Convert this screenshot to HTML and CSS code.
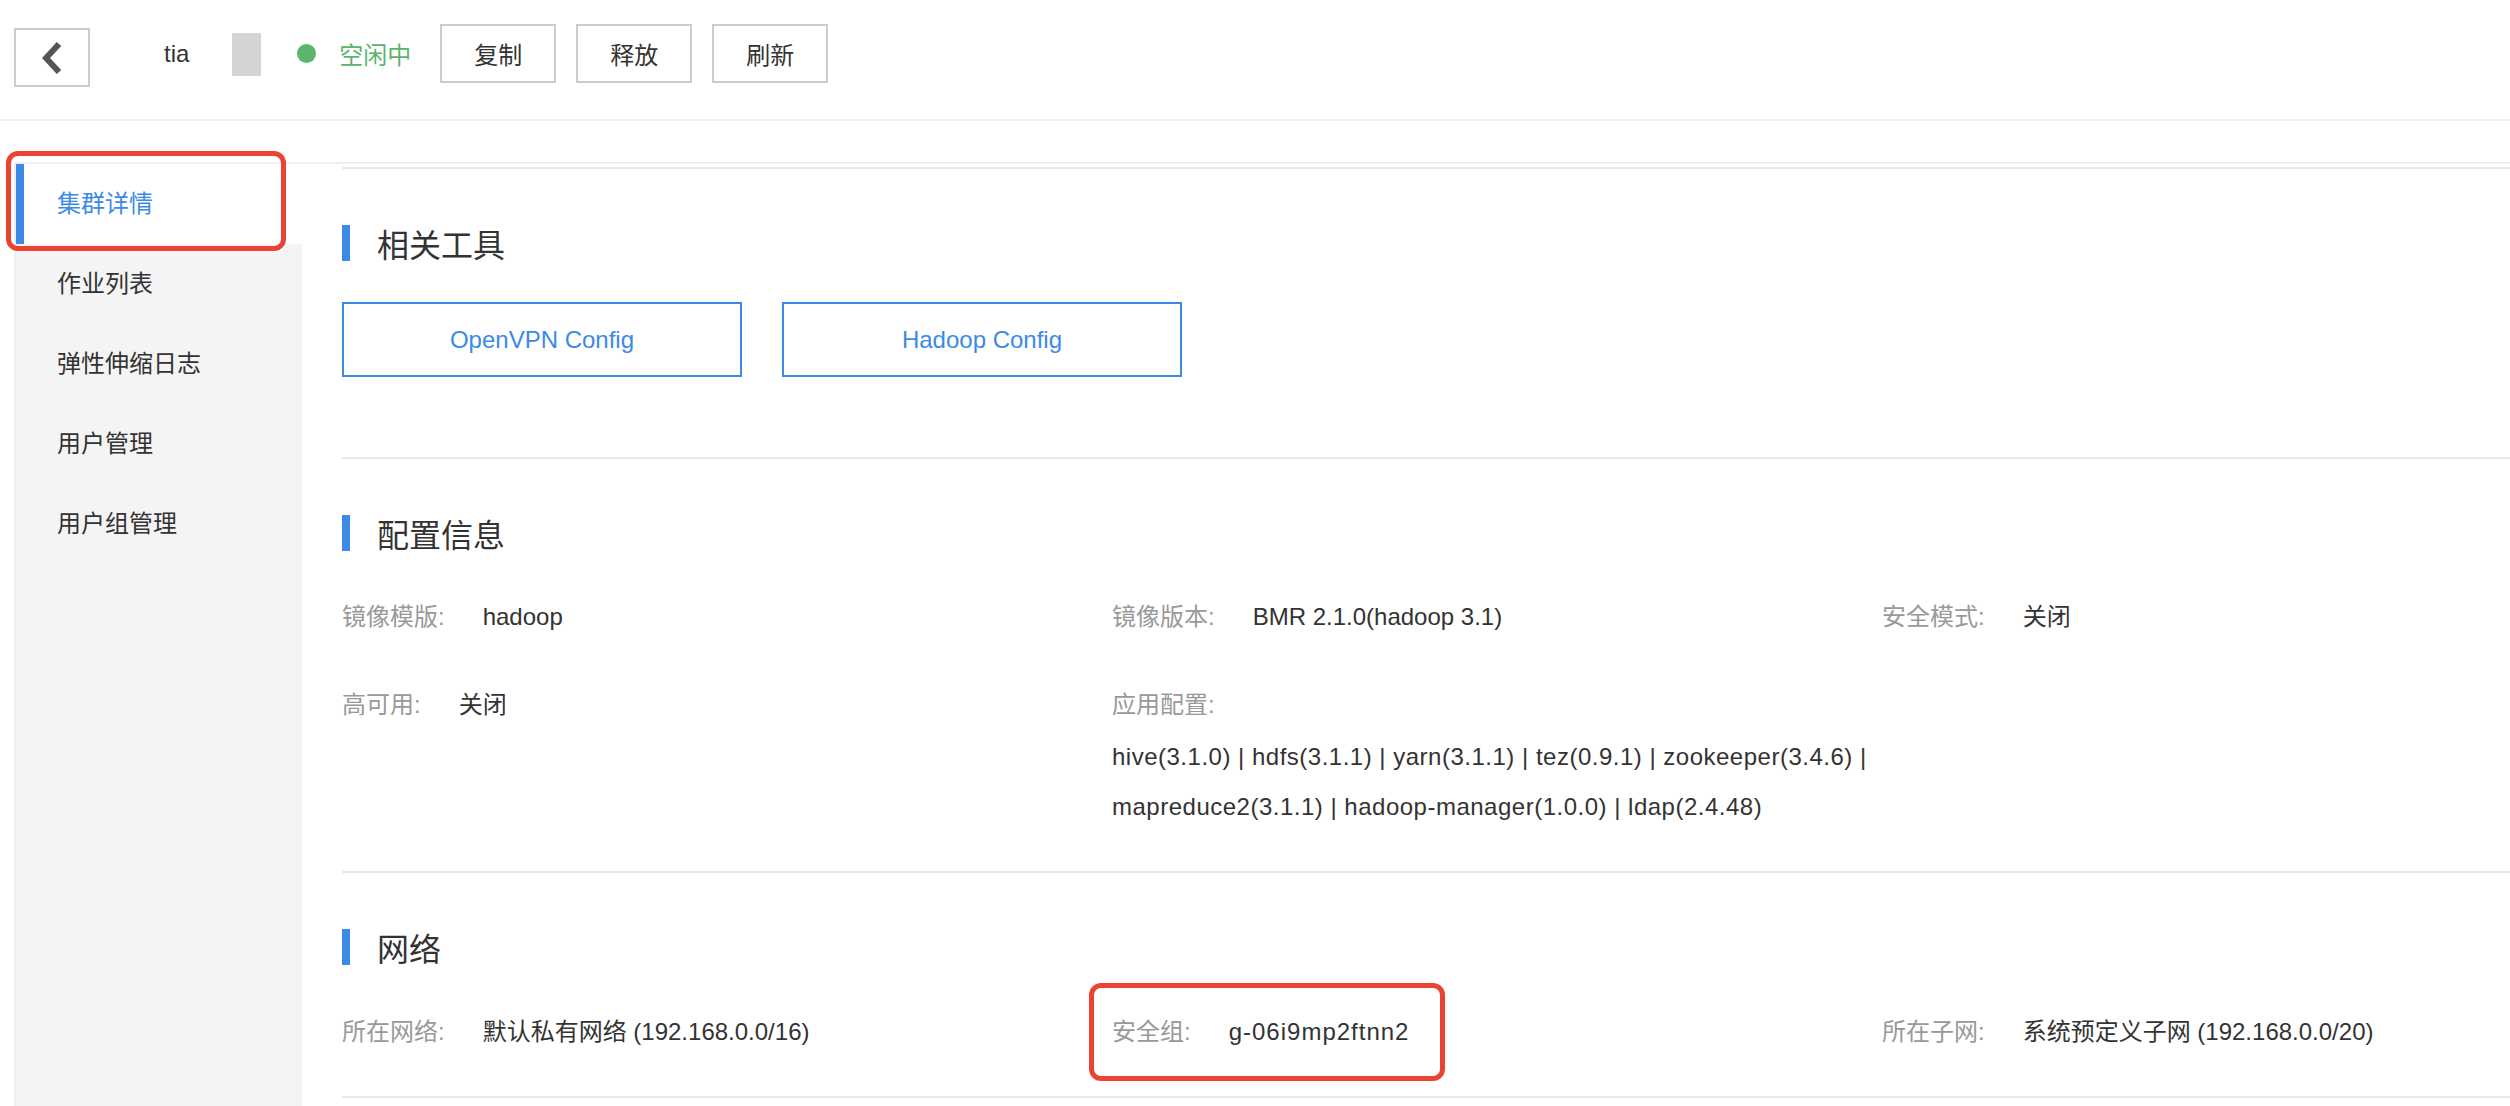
FILE: index.html
```html
<!DOCTYPE html>
<html lang="zh-CN">
<head>
    <meta charset="UTF-8">
    <title>集群详情</title>
    <link rel="stylesheet" href="styles.css">
</head>
<body>
    <div class="header">
        <a class="back-btn" href="#">
            <svg width="20" height="32" viewBox="0 0 20 32"><polyline points="17,2 4,16 17,30" fill="none" stroke="#555" stroke-width="6"/></svg>
        </a>
        <span class="cluster-name">tia</span>
        <span class="name-mask"></span>
        <span class="status"><i class="dot"></i>空闲中</span>
        <button class="btn first">复制</button>
        <button class="btn">释放</button>
        <button class="btn">刷新</button>
    </div>

    <div class="layout">
        <ul class="menu">
            <li class="active">集群详情<span class="mark menu-mark"></span></li>
            <li>作业列表</li>
            <li>弹性伸缩日志</li>
            <li>用户管理</li>
            <li>用户组管理</li>
        </ul>

        <div class="content">
            <div class="section tools-section">
                <h2 class="section-title">相关工具</h2>
                <div class="tools">
                    <button class="tool-btn">OpenVPN Config</button>
                    <button class="tool-btn">Hadoop Config</button>
                </div>
            </div>

            <div class="section config-section">
                <h2 class="section-title">配置信息</h2>
                <div class="info-grid">
                    <div class="item"><span class="label">镜像模版:</span><span class="value">hadoop</span></div>
                    <div class="item"><span class="label">镜像版本:</span><span class="value">BMR 2.1.0(hadoop 3.1)</span></div>
                    <div class="item"><span class="label">安全模式:</span><span class="value">关闭</span></div>
                    <div class="item"><span class="label">高可用:</span><span class="value">关闭</span></div>
                    <div class="item">
                        <span class="label">应用配置:</span>
                        <div class="app-list">
                            hive(3.1.0) | hdfs(3.1.1) | yarn(3.1.1) | tez(0.9.1) | zookeeper(3.4.6) |<br>
                            mapreduce2(3.1.1) | hadoop-manager(1.0.0) | ldap(2.4.48)
                        </div>
                    </div>
                </div>
            </div>

            <div class="section network-section">
                <h2 class="section-title">网络</h2>
                <div class="info-grid">
                    <div class="item"><span class="label">所在网络:</span><span class="value">默认私有网络 (192.168.0.0/16)</span></div>
                    <div class="item sg-item"><span class="label">安全组:</span><span class="value sg-id">g-06i9mp2ftnn2</span><span class="mark sg-mark"></span></div>
                    <div class="item"><span class="label">所在子网:</span><span class="value">系统预定义子网 (192.168.0.0/20)</span></div>
                </div>
            </div>
        </div>
    </div>
</body>
</html>
```

FILE: styles.css
```css
body {
    font-family: "Liberation Sans", "Noto Sans CJK SC", sans-serif;
    font-size: 24px;
    color: #333;
    background: #fff;
    margin: 0;
    overflow: hidden;
}
.header {
    display: flex;
    align-items: flex-start;
    height: 121px;
    padding: 24px 0 0 14px;
    box-sizing: border-box;
    border-bottom: 2px solid #eceef8;
}
.back-btn {
    display: flex;
    align-items: center;
    justify-content: center;
    width: 76px;
    height: 59px;
    margin-top: 4px;
    border: 2px solid #ccc;
    box-sizing: border-box;
}
.cluster-name {
    margin-left: 74px;
    line-height: 59px;
}
.name-mask {
    width: 29px;
    height: 43px;
    margin: 9px 0 0 43px;
    background: #d4d4d4;
}
.status {
    display: flex;
    align-items: center;
    height: 59px;
    margin-left: 36px;
    color: #5bb56b;
}
.dot {
    width: 19px;
    height: 19px;
    border-radius: 50%;
    background: #5bb56b;
    margin-right: 23px;
}
.btn {
    width: 116px;
    height: 59px;
    margin-left: 20px;
    padding: 0;
    border: 2px solid #ccc;
    background: #fff;
    font-family: inherit;
    font-size: 24px;
    color: #333;
}
.btn.first {
    margin-left: 29px;
}

.layout {
    display: flex;
    margin: 41px 0 0 14px;
    min-height: calc(100vh - 164px);
    border-top: 2px solid #eceef8;
    border-left: 2px solid #eceef8;
}
.menu {
    width: 286px;
    flex-shrink: 0;
    margin: 0;
    padding: 0;
    list-style: none;
    background: #f4f4f4;
}
.menu li {
    position: relative;
    height: 80px;
    line-height: 80px;
    padding-left: 33px;
    border-left: 8px solid transparent;
}
.menu li.active {
    background: #fff;
    border-left-color: #3c8ae6;
    color: #3c8ae6;
}
.mark {
    position: absolute;
    border: 5px solid #ea4332;
    border-radius: 12px;
    box-sizing: border-box;
}
.menu-mark {
    left: -18px;
    top: -13px;
    width: 280px;
    height: 100px;
}

.content {
    flex: 1;
    padding: 3px 0 0 40px;
}
.section {
    border-top: 2px solid #e9e9e9;
    padding-top: 56px;
}
.section-title {
    display: flex;
    align-items: center;
    height: 36px;
    margin: 0;
    font-size: 32px;
    font-weight: normal;
    color: #333;
}
.section-title::before {
    content: "";
    width: 8px;
    height: 36px;
    margin-right: 27px;
    background: #3c8ae6;
}
.tools-section {
    padding-bottom: 80px;
}
.tools {
    display: flex;
    gap: 40px;
    margin-top: 41px;
}
.tool-btn {
    width: 400px;
    height: 75px;
    border: 2px solid #3c8ae6;
    background: #fff;
    color: #3c8ae6;
    font-family: inherit;
    font-size: 24px;
}
.config-section {
    padding-bottom: 39px;
}
.network-section {
    padding-bottom: 44px;
    border-bottom: 2px solid #e9e9e9;
}
.info-grid {
    display: grid;
    grid-template-columns: 770px 770px 1fr;
    row-gap: 48px;
    margin-top: 46px;
}
.network-section .info-grid {
    margin-top: 47px;
}
.item {
    position: relative;
    line-height: 40px;
}
.label {
    color: #999;
    margin-right: 38px;
}
.app-list {
    margin-top: 7px;
    line-height: 50px;
    letter-spacing: 0.5px;
}
.sg-id {
    letter-spacing: 1px;
}
.sg-mark {
    left: -23px;
    top: -29px;
    width: 356px;
    height: 98px;
}
```
